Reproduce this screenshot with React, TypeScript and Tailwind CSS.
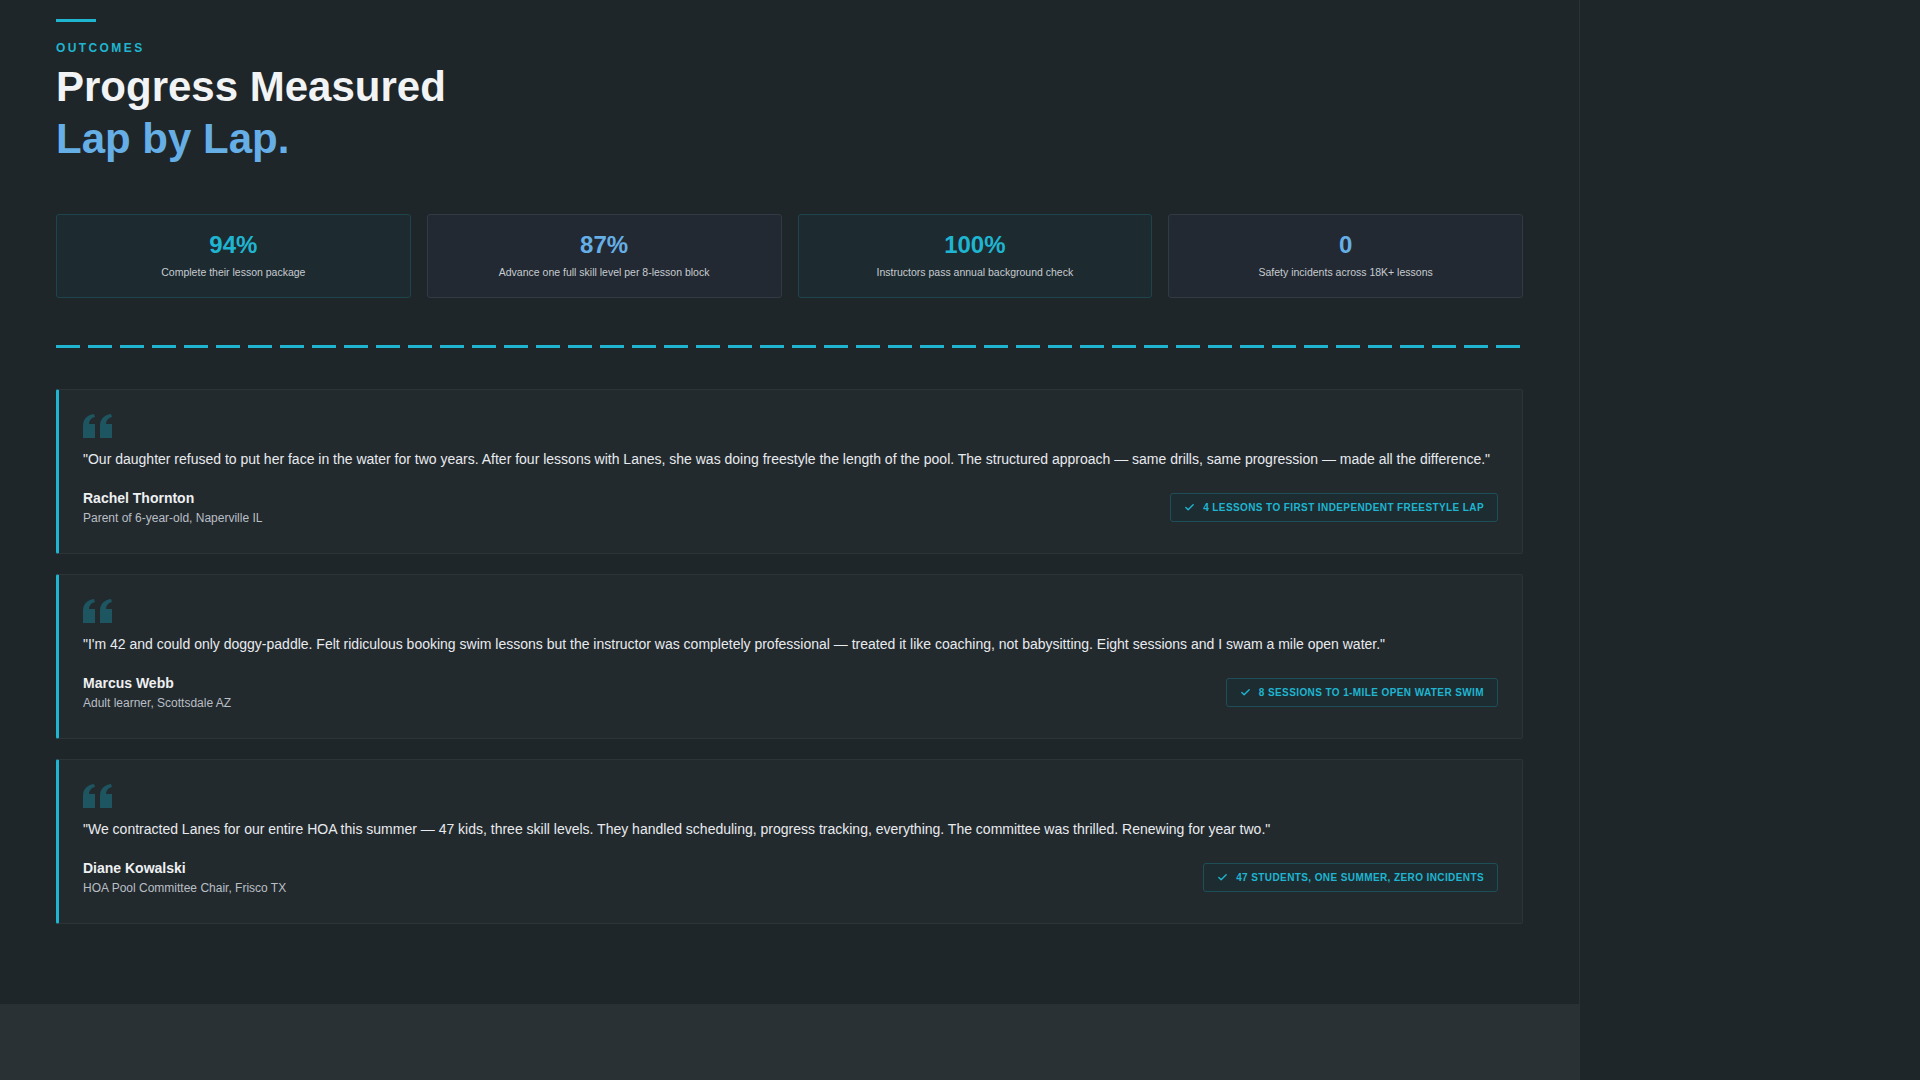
import { Check } from 'lucide-react';

const stats = [
  { value: '94%', label: 'Complete their lesson package', teal: true },
  { value: '87%', label: 'Advance one full skill level per 8-lesson block', teal: false },
  { value: '100%', label: 'Instructors pass annual background check', teal: true },
  { value: '0', label: 'Safety incidents across 18K+ lessons', teal: false },
];

const testimonials = [
  {
    quote: '"Our daughter refused to put her face in the water for two years. After four lessons with Lanes, she was doing freestyle the length of the pool. The structured approach — same drills, same progression — made all the difference."',
    name: 'Rachel Thornton',
    role: 'Parent of 6-year-old, Naperville IL',
    badge: '4 lessons to first independent freestyle lap',
  },
  {
    quote: '"I\'m 42 and could only doggy-paddle. Felt ridiculous booking swim lessons but the instructor was completely professional — treated it like coaching, not babysitting. Eight sessions and I swam a mile open water."',
    name: 'Marcus Webb',
    role: 'Adult learner, Scottsdale AZ',
    badge: '8 sessions to 1-mile open water swim',
  },
  {
    quote: '"We contracted Lanes for our entire HOA this summer — 47 kids, three skill levels. They handled scheduling, progress tracking, everything. The committee was thrilled. Renewing for year two."',
    name: 'Diane Kowalski',
    role: 'HOA Pool Committee Chair, Frisco TX',
    badge: '47 students, one summer, zero incidents',
  },
];

function QuoteMark() {
  return (
    <svg width="30" height="24" viewBox="0 0 30 24" className="text-[#1d5560]">
      <path fill="currentColor" d="M0 12C0 5 4 1 11 0l1 3C8 4 6 7 6 10h6v14H0zM17 12c0-7 4-11 11-12l1 3c-4 1-6 4-6 7h6v14H17z" />
    </svg>
  );
}

export default function App() {
  return (
    <div className="min-h-screen w-full bg-[#1f2629] flex" style={{ fontFamily: '"Liberation Sans", Arial, sans-serif' }}>
      <div className="w-[1580px] shrink-0 border-r border-[#2a3236] flex flex-col">
        <section className="px-[56px] pt-[19px] pb-[80px]">
          <div className="h-[3px] w-[40px] bg-[#1fb5d0]" />
          <p className="mt-[17px] text-[12px] font-bold tracking-[0.2em] text-[#1fb5d0]">OUTCOMES</p>
          <h2 className="mt-[4px] text-[42px] font-bold leading-[52px] text-[#f1f3f5]">
            Progress Measured
            <br />
            <span className="text-[#66afe6]">Lap by Lap.</span>
          </h2>

          <div className="mt-[49px] grid grid-cols-4 gap-[16px] w-[1467px]">
            {stats.map((s, i) => (
              <div
                key={i}
                className={`h-[84px] rounded-[3px] border flex flex-col items-center justify-center ${s.teal ? 'bg-[#1d2a30] border-[#1e444c]' : 'bg-[#222932] border-[#323b44]'}`}
              >
                <p className={`text-[24px] font-bold leading-[28px] ${s.teal ? 'text-[#1fb5d0]' : 'text-[#66afe6]'}`}>{s.value}</p>
                <p className="mt-[6px] text-[10.5px] text-[#c7ccd1]">{s.label}</p>
              </div>
            ))}
          </div>

          <div className="mt-[47px] w-[1467px] h-[3px] bg-[repeating-linear-gradient(90deg,#1fb5d0_0_24px,transparent_24px_32px)]" />

          <div className="mt-[41px] w-[1467px] flex flex-col gap-[20px]">
            {testimonials.map((t, i) => (
              <div key={i} className="bg-[#232a2e] border border-[#2c3438] border-l-[3px] border-l-[#1fb5d0] rounded-[2px] px-[24px] pt-[24px] pb-[26px]">
                <QuoteMark />
                <p className="mt-[10px] text-[14px] leading-[22px] text-[#e8ebee]">{t.quote}</p>
                <div className="mt-[18px] flex items-center justify-between">
                  <div>
                    <p className="text-[14px] font-bold text-[#eef0f2] leading-[20px]">{t.name}</p>
                    <p className="mt-[1px] text-[12px] text-[#b9bfc5]">{t.role}</p>
                  </div>
                  <div className="flex items-center gap-[8px] h-[29px] px-[13px] rounded-[3px] border border-[#1e4f59] bg-[#1d2c31] text-[#1fb5d0]">
                    <Check size={11} strokeWidth={3} />
                    <span className="text-[10px] font-bold uppercase tracking-[0.04em]">{t.badge}</span>
                  </div>
                </div>
              </div>
            ))}
          </div>
        </section>
        <section className="flex-1 bg-[#2a3134] px-[56px] pt-[78px] min-h-[82px]">
          <div className="h-[3px] w-[40px] bg-[#1fb5d0]" />
        </section>
      </div>
      <div className="flex-1" />
    </div>
  );
}
